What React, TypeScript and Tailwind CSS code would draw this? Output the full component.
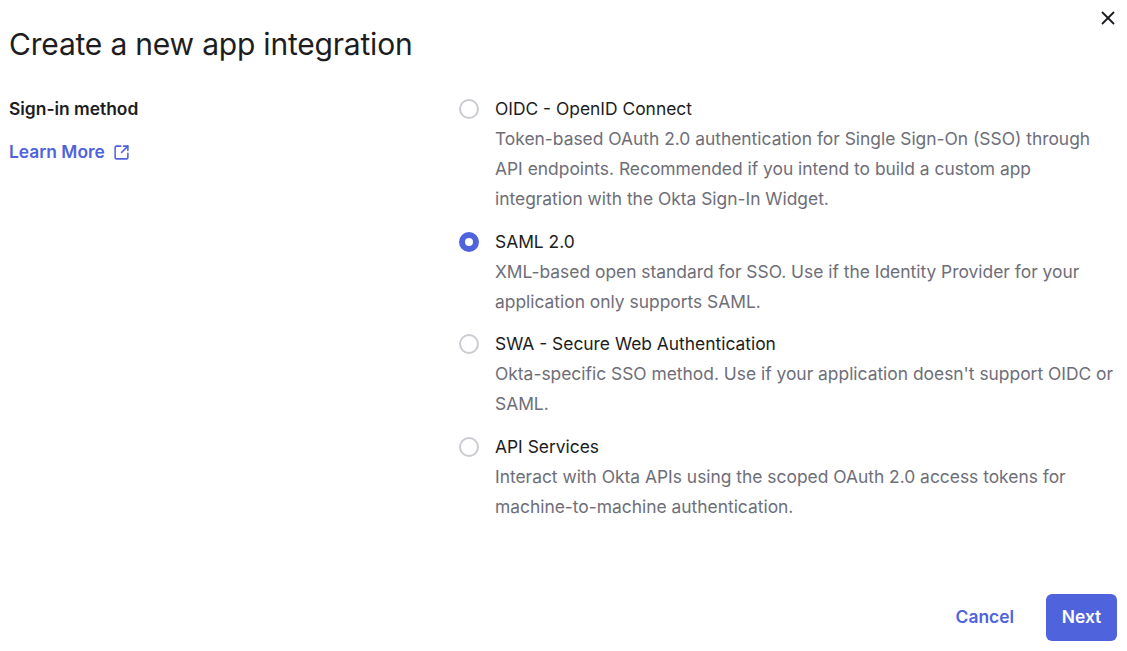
import { X, SquareArrowOutUpRight } from "lucide-react";

const OPTIONS = [
  {
    id: "oidc",
    label: "OIDC - OpenID Connect",
    desc: "Token-based OAuth 2.0 authentication for Single Sign-On (SSO) through API endpoints. Recommended if you intend to build a custom app integration with the Okta Sign-In Widget.",
  },
  {
    id: "saml",
    label: "SAML 2.0",
    desc: "XML-based open standard for SSO. Use if the Identity Provider for your application only supports SAML.",
  },
  {
    id: "swa",
    label: "SWA - Secure Web Authentication",
    desc: "Okta-specific SSO method. Use if your application doesn't support OIDC or SAML.",
  },
  {
    id: "api",
    label: "API Services",
    desc: "Interact with Okta APIs using the scoped OAuth 2.0 access tokens for machine-to-machine authentication.",
  },
];

export default function App() {
  const selected = "saml";

  return (
    <div className="h-screen flex flex-col bg-white text-[#1d1d21] font-['Inter',sans-serif] overflow-hidden">
      {/* header */}
      <div className="flex items-start justify-between pl-[9px] pr-[4px]">
        <h1 className="mt-[26px] text-[30px] leading-9 font-normal tracking-[-0.2px]">
          Create a new app integration
        </h1>
        <button className="mt-[3px] p-1 text-[#1d1d21]" aria-label="Close">
          <X size={22} strokeWidth={2} />
        </button>
      </div>

      {/* body */}
      <div className="flex mt-[32px] pl-[9px] pr-[10px]">
        <div className="w-[450px] shrink-0">
          <div className="text-[17.4px] leading-[30px] font-semibold">Sign-in method</div>
          <a className="mt-[13px] flex items-center gap-[8px] text-[17.4px] leading-[30px] font-semibold text-[#4f63dd]">
            Learn More
            <SquareArrowOutUpRight size={17} strokeWidth={2.2} />
          </a>
        </div>

        <div className="flex-1 flex flex-col gap-[12.5px]">
          {OPTIONS.map((o) => {
            const on = o.id === selected;
            return (
              <label key={o.id} className="flex items-start gap-4 cursor-pointer">
                <span
                  className={
                    on
                      ? "mt-[5px] w-5 h-5 shrink-0 rounded-full border-[6px] border-[#4f63dd] bg-white"
                      : "mt-[5px] w-5 h-5 shrink-0 rounded-full border-2 border-[#cbcbd1] bg-white"
                  }
                />
                <span className="flex flex-col">
                  <span className="text-[17.4px] leading-[30px]">{o.label}</span>
                  <span className="text-[17.4px] leading-[30px] text-[#6e6e78]">{o.desc}</span>
                </span>
              </label>
            );
          })}
        </div>
      </div>

      {/* footer */}
      <div className="mt-auto mb-[10px] flex items-center justify-end gap-[16px] pr-[10px]">
        <button className="px-4 h-[47px] text-[17.4px] font-semibold text-[#4f63dd]">Cancel</button>
        <button className="w-[71px] h-[47px] rounded-md bg-[#4f63dd] text-[17.4px] font-semibold text-white">
          Next
        </button>
      </div>
    </div>
  );
}
